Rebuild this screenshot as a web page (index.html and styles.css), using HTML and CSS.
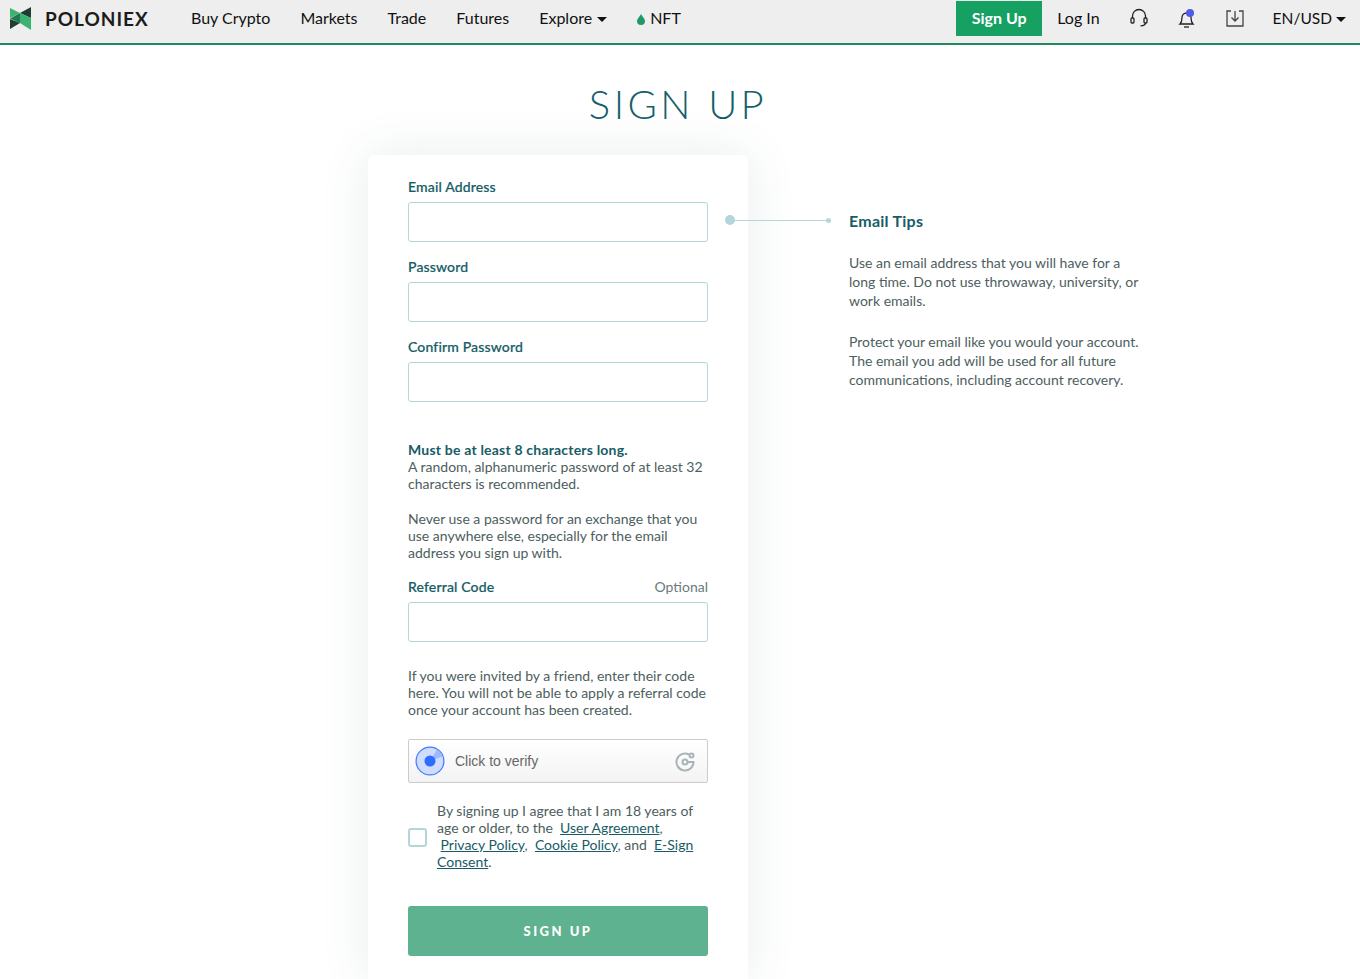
FILE: index.html
```html
<!DOCTYPE html>
<html lang="en">
<head>
    <meta charset="UTF-8">
    <meta name="viewport" content="width=device-width, initial-scale=1.0">
    <title>Sign Up - Poloniex</title>
    <link rel="stylesheet" href="styles.css">
</head>
<body>
    <nav class="topbar">
        <a class="brand" href="#">
            <svg class="brand-logo" width="21" height="23" viewBox="0 0 21 23">
                <polygon points="0,1 10,6 0,11" fill="#3cb371"/>
                <polygon points="21,0 10,6 21,11" fill="#1f3d33"/>
                <polygon points="0,11.500 10,6 10,16" fill="#1f7a50"/>
                <polygon points="0,12 10,16 0,22" fill="#1f3d33"/>
                <polygon points="10,6 21,11 21,23 10,16" fill="#3cb371"/>
            </svg>
            <span class="brand-name">POLONIEX</span>
        </a>
        <ul class="nav-links">
            <li><a href="#">Buy Crypto</a></li>
            <li><a href="#">Markets</a></li>
            <li><a href="#">Trade</a></li>
            <li><a href="#">Futures</a></li>
            <li><a href="#">Explore<span class="caret"></span></a></li>
            <li>
                <a href="#">
                    <svg class="drop" width="8" height="11" viewBox="0 0 8 11"><path d="M4 0C5 2.500 8 4.500 8 7a4 4 0 0 1-8 0C0 4.500 3 2.500 4 0z" fill="#1f9a66"/></svg>NFT
                </a>
            </li>
        </ul>
        <div class="nav-right">
            <a class="signup-btn" href="#">Sign Up</a>
            <a class="login" href="#">Log In</a>
            <svg class="nav-icon" width="20" height="20" viewBox="0 0 20 20" fill="none" stroke="#222" stroke-width="1.3">
                <path d="M3.500 10V8a6.500 6.500 0 0 1 13 0v2"/>
                <rect x="2" y="10" width="3" height="5" rx="1"/>
                <rect x="15" y="10" width="3" height="5" rx="1"/>
                <path d="M16.500 15c0 1.800-2 2.800-5 2.800"/>
            </svg>
            <svg class="nav-icon" width="20" height="20" viewBox="0 0 20 20" fill="none" stroke="#222" stroke-width="1.3">
                <path d="M3 16c1.500-1.500 2-3 2-6.500a4.500 4.500 0 0 1 9 0c0 3.500.5 5 2 6.500z"/>
                <path d="M7 19h5"/>
                <circle cx="13" cy="5" r="4" fill="#4f5be8" stroke="none"/>
            </svg>
            <svg class="nav-icon" width="20" height="20" viewBox="0 0 20 20" fill="none" stroke="#444" stroke-width="1.3">
                <path d="M6 3H2v15h16V3h-4"/>
                <path d="M10 3v10M6.500 9.500l3.500 3.500 3.500-3.500"/>
            </svg>
            <a class="locale" href="#">EN/USD<span class="caret"></span></a>
        </div>
    </nav>

    <main class="page">
        <h1 class="page-title">SIGN UP</h1>
        <div class="columns">
            <form class="card">
                <div class="field">
                    <label class="field-label">Email Address</label>
                    <input class="field-input" type="text">
                </div>
                <div class="field">
                    <label class="field-label">Password</label>
                    <input class="field-input" type="password">
                </div>
                <div class="field">
                    <label class="field-label">Confirm Password</label>
                    <input class="field-input" type="password">
                </div>
                <div class="hint pass-hint">
                    <p><strong>Must be at least 8 characters long.</strong><br>A random, alphanumeric password of at least 32 characters is recommended.</p>
                    <p>Never use a password for an exchange that you use anywhere else, especially for the email address you sign up with.</p>
                </div>
                <div class="field">
                    <div class="label-row">
                        <label class="field-label">Referral Code</label>
                        <span class="optional">Optional</span>
                    </div>
                    <input class="field-input" type="text">
                </div>
                <p class="hint referral-hint">If you were invited by a friend, enter their code here. You will not be able to apply a referral code once your account has been created.</p>
                <div class="captcha">
                    <svg width="30" height="30" viewBox="0 0 30 30">
                        <circle cx="15" cy="15" r="14.500" fill="#3f7bff"/>
                        <circle cx="15" cy="15" r="13.300" fill="#cfdcfb"/>
                        <path d="M15 15L22 3.600A13.300 13.300 0 0 1 27.500 10.500z" fill="#9dbafa"/>
                        <circle cx="15" cy="15" r="5.500" fill="#2f6bff"/>
                    </svg>
                    <span class="captcha-text">Click to verify</span>
                    <svg class="captcha-logo" width="21" height="21" viewBox="0 0 21 21" fill="none" stroke="#a9b4b6" stroke-width="2">
                        <path d="M14 3.500A8.500 8.500 0 1 0 18.500 11H12.500"/>
                        <circle cx="10" cy="11" r="2.500"/>
                        <circle cx="16.500" cy="4.500" r="2"/>
                    </svg>
                </div>
                <div class="agree">
                    <span class="checkbox"></span>
                    <p>By signing up I agree that I am 18 years of age or older, to the &nbsp;<a href="#">User Agreement</a>, &nbsp;<a href="#">Privacy Policy</a>, &nbsp;<a href="#">Cookie Policy</a>, and &nbsp;<a href="#">E-Sign Consent</a>.</p>
                </div>
                <button class="submit" type="button">SIGN UP</button>
            </form>
            <aside class="tips">
                <span class="tips-line"></span>
                <h3 class="tips-title">Email Tips</h3>
                <p>Use an email address that you will have for a long time. Do not use throwaway, university, or work emails.</p>
                <p>Protect your email like you would your account. The email you add will be used for all future communications, including account recovery.</p>
            </aside>
        </div>
    </main>
</body>
</html>
```

FILE: styles.css
```css
* {
    margin: 0;
    padding: 0;
    box-sizing: border-box;
}
html, body {
    height: 100vh;
    overflow: hidden;
}
body {
    background: #fff;
    font-family: "Lato", "Liberation Sans", sans-serif;
    color: #1b2a2c;
}
a {
    text-decoration: none;
    color: inherit;
}

.topbar {
    display: flex;
    align-items: center;
    height: 45px;
    padding: 0 0 7px 10px;
    background: #eee;
    border-bottom: 2px solid #1f8a5f;
}
.brand {
    display: flex;
    align-items: center;
    width: 181px;
}
.brand-logo {
    margin-right: 14px;
}
.brand-name {
    font-size: 19px;
    font-weight: 700;
    letter-spacing: 1px;
    color: #1c1c1c;
}
.nav-links {
    display: flex;
    gap: 30px;
    margin-bottom: 2px;
    list-style: none;
    font-size: 16px;
    color: #111;
}
.caret {
    display: inline-block;
    margin-left: 5px;
    vertical-align: 2px;
    border-left: 5px solid transparent;
    border-right: 5px solid transparent;
    border-top: 5px solid #111;
}
.drop {
    margin-right: 5px;
    vertical-align: -1px;
}
.nav-right {
    display: flex;
    align-items: center;
    margin-left: auto;
    font-size: 16px;
    color: #111;
}
.signup-btn {
    display: block;
    width: 86px;
    height: 35px;
    margin-top: 1px;
    line-height: 33px;
    text-align: center;
    background: #16a062;
    color: #fff;
    font-weight: 700;
}
.login {
    margin-left: 15px;
    margin-right: 29px;
    margin-bottom: 2px;
}
.nav-icon {
    margin-right: 28px;
}
.locale {
    margin-right: 14px;
    font-size: 15.500px;
}
.locale .caret {
    margin-left: 4px;
}

.page-title {
    margin-top: 35px;
    padding-right: 4px;
    text-align: center;
    font-size: 40px;
    line-height: 48px;
    font-weight: 300;
    letter-spacing: 3.400px;
    color: #155f6b;
}
.columns {
    display: flex;
    margin-top: 27px;
    padding-left: 368px;
}
.card {
    width: 380px;
    height: 824px;
    padding: 22px 40px 0;
    background: #fff;
    border-radius: 6px 6px 0 0;
    box-shadow: 0 0 50px rgba(30, 80, 90, 0.1);
}
.field {
    margin-bottom: 15px;
}
.field-label {
    display: block;
    font-size: 14px;
    line-height: 20px;
    margin-bottom: 5px;
    color: #175c66;
    font-weight: 500;
    letter-spacing: 0.15px;
    -webkit-text-stroke: 0.2px #175c66;
}
.field-input {
    display: block;
    width: 100%;
    height: 40px;
    border: 1px solid #b5d6d8;
    border-radius: 3px;
    background: #fff;
}
.label-row {
    display: flex;
    justify-content: space-between;
}
.optional {
    font-size: 14px;
    line-height: 20px;
    color: #6b7a7c;
}
.hint {
    font-size: 14px;
    line-height: 17px;
    color: #4d5e60;
}
.hint strong {
    color: #175c66;
    letter-spacing: 0.2px;
}
.pass-hint {
    margin-top: 39px;
    margin-bottom: 16px;
}
.pass-hint p + p {
    margin-top: 18px;
}
.referral-hint {
    margin-top: 25px;
}
.captcha {
    display: flex;
    align-items: center;
    height: 44px;
    margin-top: 21px;
    padding: 0 11px 0 6px;
    border: 1px solid #ccc;
    border-radius: 2px;
    background: linear-gradient(#fff, #f3f3f3);
}
.captcha-text {
    margin-left: 10px;
    font-family: "Liberation Sans", sans-serif;
    font-size: 14px;
    color: #666;
}
.captcha-logo {
    margin-left: auto;
}
.agree {
    display: flex;
    align-items: center;
    margin-top: 19px;
}
.checkbox {
    flex: none;
    width: 19px;
    height: 19px;
    margin-top: 2px;
    margin-right: 10px;
    border: 2px solid #b5d6d8;
    border-radius: 3px;
}
.agree p {
    font-size: 14px;
    line-height: 17px;
    color: #4d5e60;
}
.agree a {
    color: #175c66;
    text-decoration: underline;
}
.submit {
    display: block;
    width: 100%;
    height: 50px;
    margin-top: 36px;
    border: 0;
    border-radius: 3px;
    background: #5fb28f;
    color: #fff;
    font-family: inherit;
    font-size: 13px;
    font-weight: 900;
    letter-spacing: 2.500px;
}

.tips {
    position: relative;
    width: 295px;
    margin-left: 101px;
    padding-top: 56px;
    font-size: 14px;
    line-height: 19px;
    color: #4d5e60;
}
.tips p {
    margin-bottom: 22px;
}
.tips-title {
    margin-bottom: 22px;
    font-size: 16px;
    line-height: 20px;
    font-weight: 700;
    letter-spacing: 0.250px;
    color: #175c66;
}
.tips-line {
    position: absolute;
    top: 65px;
    left: -124px;
    width: 106px;
    height: 1px;
    background: #b5d6d8;
}
.tips-line::before {
    content: "";
    position: absolute;
    left: 0;
    top: -5px;
    width: 10px;
    height: 10px;
    border-radius: 50%;
    background: #b5d6d8;
}
.tips-line::after {
    content: "";
    position: absolute;
    right: 0;
    top: -2px;
    width: 5px;
    height: 5px;
    border-radius: 50%;
    background: #b5d6d8;
}
```
